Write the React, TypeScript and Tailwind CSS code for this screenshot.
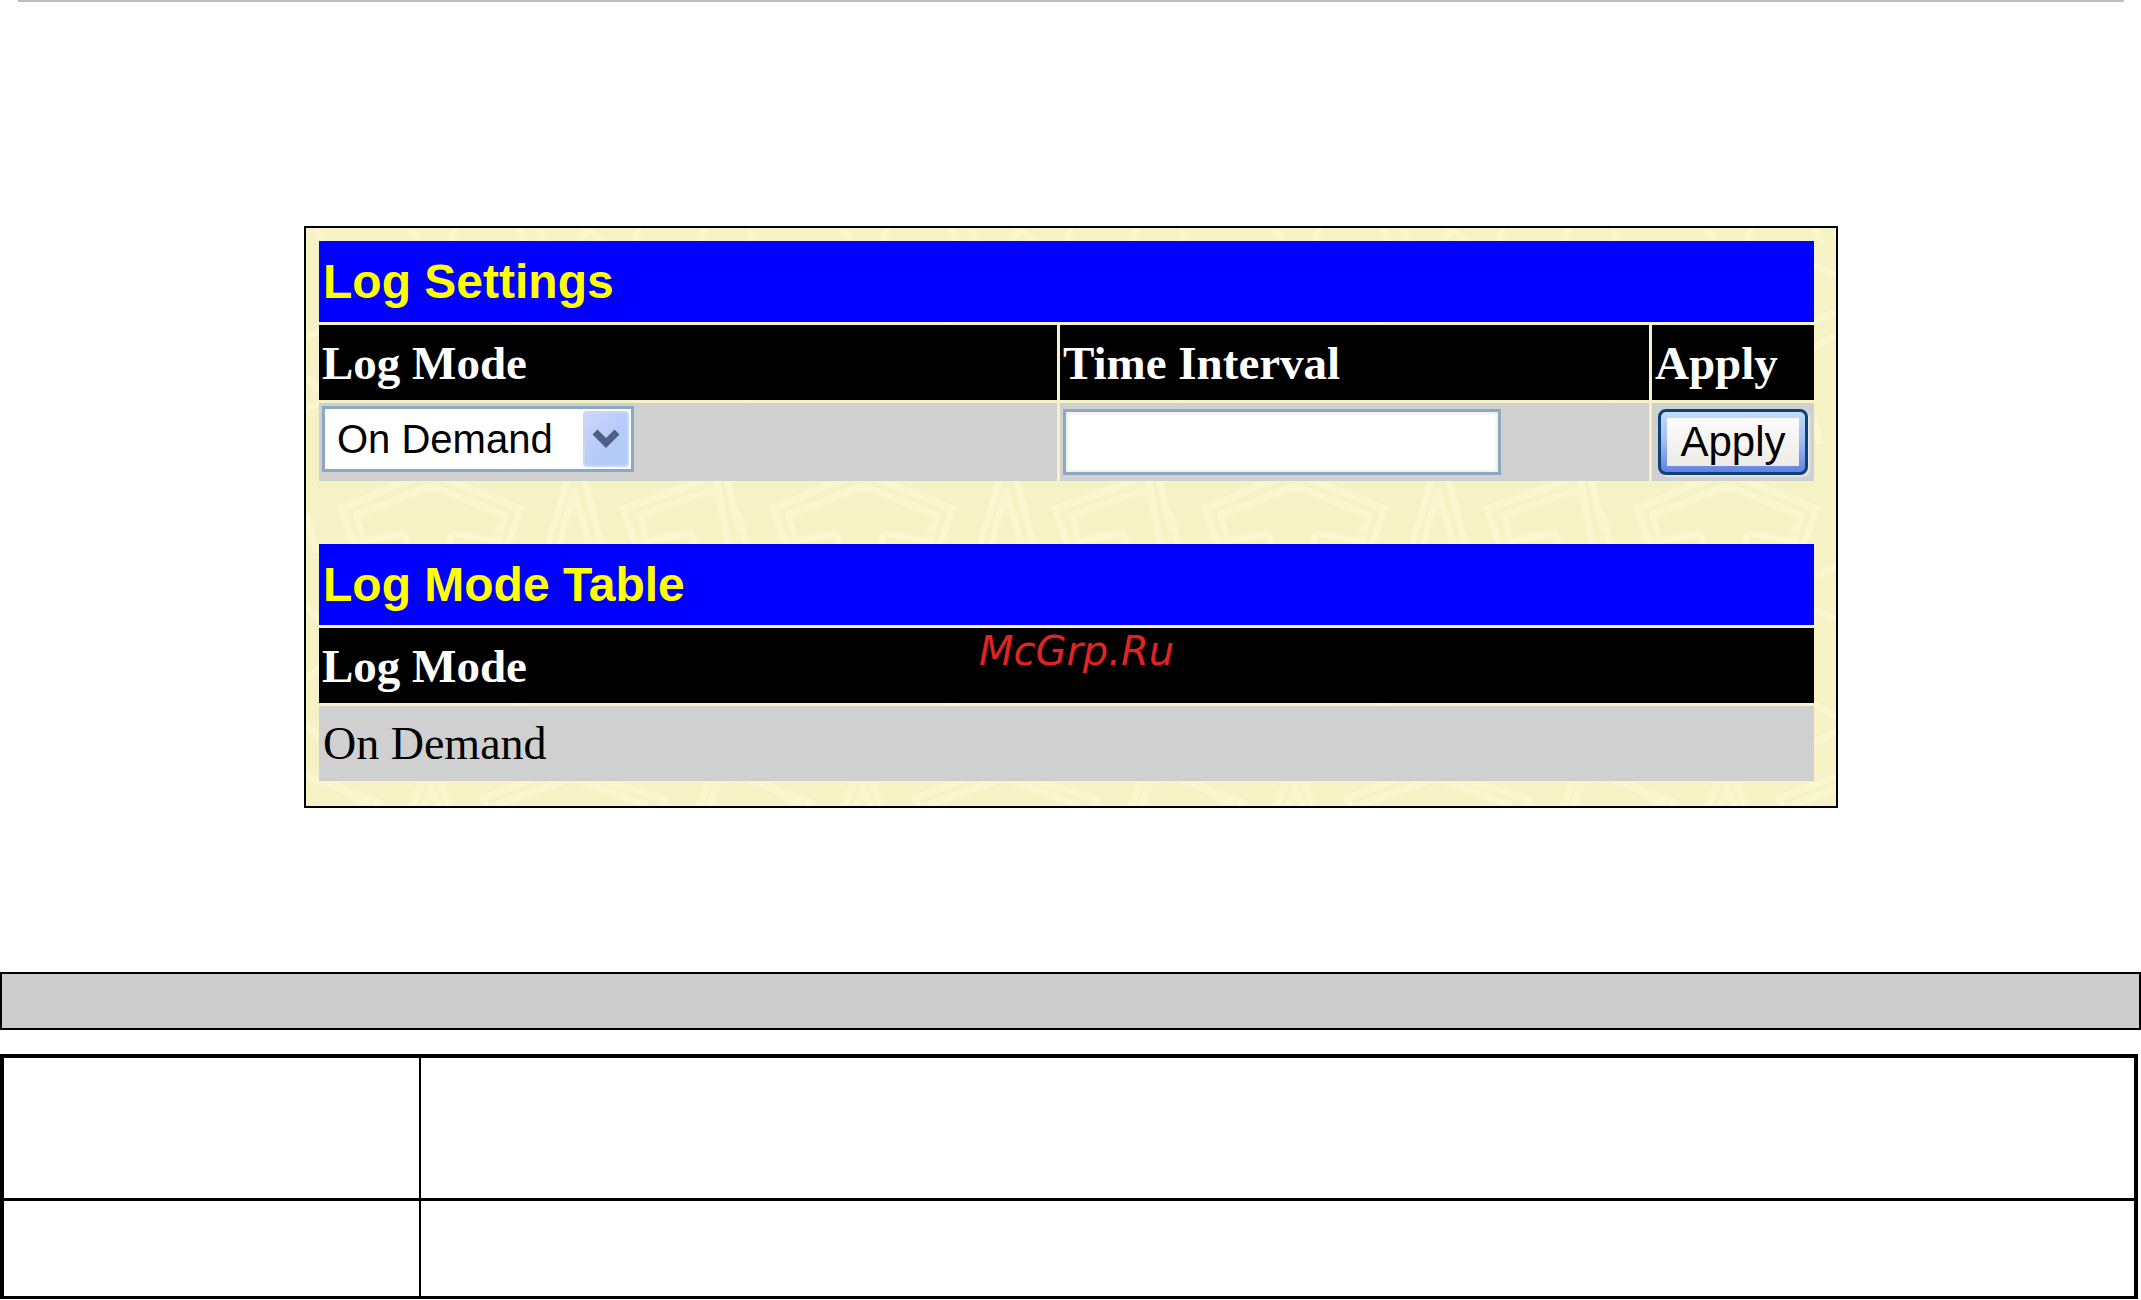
import { ReactNode, useState } from 'react'

const MODES = ['On Demand', 'Time Interval', 'Log Trigger']

function Watermark() {
  return (
    <svg className="absolute inset-0 w-full h-full" aria-hidden="true">
      <defs>
        <pattern id="stones" width="432" height="600" patternUnits="userSpaceOnUse">
          <g fill="none" stroke="#faf7cf" strokeWidth="7" strokeLinejoin="round">
            {/* middle band */}
            <path d="M52 325 L34 281 L106 251 Q122 245 140 251 L215 281 L198 325"/>
            <path d="M62 325 L50 287 L110 264 Q122 257 136 262 L200 288 L188 316"/>
            <path d="M52 314 L98 305 L104 325 M146 305 L196 314 M146 305 L140 325"/>
            <path d="M240 325 L262 250 M278 250 L297 325 M250 325 L268 264 L286 325"/>
            <path d="M332 325 L317 281 L398 252 M344 325 L334 287 L408 262"/>
            <path d="M334 314 L384 305 L391 325"/>
            <path d="M410 250 L424 325 M421 250 L438 325"/>
            <path d="M0 285 L10 325"/>
            {/* bottom band */}
            <path d="M0 548 L72 574 L68 600 M14 548 L62 578"/>
            <path d="M106 582 L118 548 M132 548 L144 582 M116 582 L126 560 L134 582"/>
            <path d="M182 590 L178 570 L236 548 M194 584 L194 575 L260 552"/>
            <path d="M282 548 L358 571 L354 590 M270 552 L342 577"/>
            <path d="M404 548 L392 582 M414 548 L402 582"/>
            {/* top band */}
            <path d="M10 0 L16 16 M104 0 L112 14 M150 0 L144 14 M212 0 L220 16 M232 0 L240 16 M272 14 Q282 -6 296 14 M328 14 L334 0 M400 0 L392 14"/>
            {/* side margins */}
            <path d="M0 108 L14 104 M0 148 L14 164 M0 180 L14 176 M0 378 L14 392 M0 450 L14 440 M0 496 L14 510"/>
            <path d="M208 36 L234 46 M208 94 L234 84 M208 120 L234 108 M212 190 L218 216 M208 350 L234 338 M208 380 L234 390 M208 474 L234 488 M208 516 L234 504"/>
          </g>
        </pattern>
      </defs>
      <rect width="100%" height="100%" fill="url(#stones)"/>
    </svg>
  )
}

function Title({ span, children }: { span?: number; children: ReactNode }) {
  return (
    <tr className="h-[81px] bg-[#0000ff] text-[#ffff00]">
      <th colSpan={span} className="p-0 pl-1 text-left font-bold text-[48px] leading-[72px]">{children}</th>
    </tr>
  )
}

function Head({ children }: { children: ReactNode }) {
  return (
    <th scope="col" className="p-0 pl-[3px] bg-black text-white text-left font-bold font-['Liberation_Serif',serif] text-[47px] leading-[72px]">
      {children}
    </th>
  )
}

export default function App() {
  const [mode, setMode] = useState(MODES[0])
  const [interval, setInterval] = useState('')

  return (
    <div className="bg-white text-black font-['Liberation_Sans',Arial,sans-serif]">
      <hr className="ml-[18px] mr-[17px] h-[2px] border-0 bg-[#bfbfbf]"/>

      {/* Switch log page */}
      <main className="relative mt-56 ml-[304px] mr-[303px] border-2 border-black bg-[#f5f2c5] pt-[10px] pb-[22px] pl-[10px] pr-[19px]">
        <Watermark/>
        <form className="relative" onSubmit={e => e.preventDefault()}>
          <table className="w-full table-fixed border-separate border-spacing-[3px]">
            <colgroup>
              <col className="w-[738px]"/>
              <col/>
              <col className="w-[162px]"/>
            </colgroup>
            <thead>
              <Title span={3}>Log Settings</Title>
              <tr className="h-[75px]">
                <Head>Log Mode</Head>
                <Head>Time Interval</Head>
                <Head>Apply</Head>
              </tr>
            </thead>
            <tbody>
              <tr className="h-[78px] bg-[#d0d0d0]">
                <td className="p-0 pl-[3px] pt-[3px] align-top">
                  <div className="relative w-[312px] h-[66px]">
                    <select aria-label="Log Mode" value={mode} onChange={e => setMode(e.target.value)}
                      className="appearance-none w-full h-full pl-[12px] pr-[54px] bg-white border-[3px] border-[#8ba8c4] text-[40px] leading-[60px]">
                      {MODES.map(m => <option key={m}>{m}</option>)}
                    </select>
                    <span className="absolute right-[5px] top-[5px] w-[46px] h-[56px] rounded-[4px] bg-linear-to-br from-[#ccd8fc] via-[#b9cbf9] to-[#aecbf8] border-2 border-[#c8d6fb] flex items-center justify-center pointer-events-none">
                      <svg width="28" height="20" viewBox="0 0 28 20" fill="none" stroke="#4d6185" strokeWidth="7">
                        <path d="M3 3 L14 14 L25 3"/>
                      </svg>
                    </span>
                  </div>
                </td>
                <td className="p-0 pl-[3px] pt-[6px] align-top">
                  <input type="text" aria-label="Time Interval" value={interval} onChange={e => setInterval(e.target.value)}
                    className="block w-[438px] h-[66px] px-3 bg-white border-[3px] border-[#8ba8c4] shadow-[inset_0_0_3px_2px_#eeeee4] text-[40px]"/>
                </td>
                <td className="p-0 pl-[6px] pt-[6px] align-top">
                  <button type="submit"
                    className="block w-[150px] h-[66px] rounded-[8px] border-[3px] border-[#0d4278] bg-linear-to-b from-[#c4dcfc] via-[#9dbcf0] to-[#6482e0] p-[6px] shadow-[2px_2px_2px_#e6e6e6]">
                    <span className="flex items-center justify-center h-full bg-linear-to-b from-[#fcfcfb] to-[#ecebe5] text-[42px] leading-[48px]">Apply</span>
                  </button>
                </td>
              </tr>
            </tbody>
          </table>
        </form>

        <div className="relative mt-[57px]">
          <table className="w-full table-fixed border-separate border-spacing-[3px]">
            <thead>
              <Title>Log Mode Table</Title>
              <tr className="h-[75px]"><Head>Log Mode</Head></tr>
            </thead>
            <tbody>
              <tr className="h-[75px] bg-[#d0d0d0]">
                <td className="p-0 pl-[4px] font-['Liberation_Serif',serif] text-[46px] leading-[72px]">{mode}</td>
              </tr>
            </tbody>
          </table>
          <a href="#" className="absolute top-[86px] inset-x-0 mx-auto pl-5 w-fit font-['DejaVu_Sans',sans-serif] italic text-[40px] leading-[48px] text-[#e02424]">
            McGrp.Ru
          </a>
        </div>
      </main>

      {/* Empty description block */}
      <div className="mt-[164px] h-[58px] border-2 border-black bg-[#cccccc]"/>
      <div className="mt-6 mr-[3px] border-4 border-b-[3px] border-black">
        <div className="flex h-[143px] border-b-[3px] border-black">
          <div className="w-[417px] border-r-2 border-black"/>
          <div className="flex-1"/>
        </div>
        <div className="flex h-[95px]">
          <div className="w-[417px] border-r-2 border-black"/>
          <div className="flex-1"/>
        </div>
      </div>
    </div>
  )
}
